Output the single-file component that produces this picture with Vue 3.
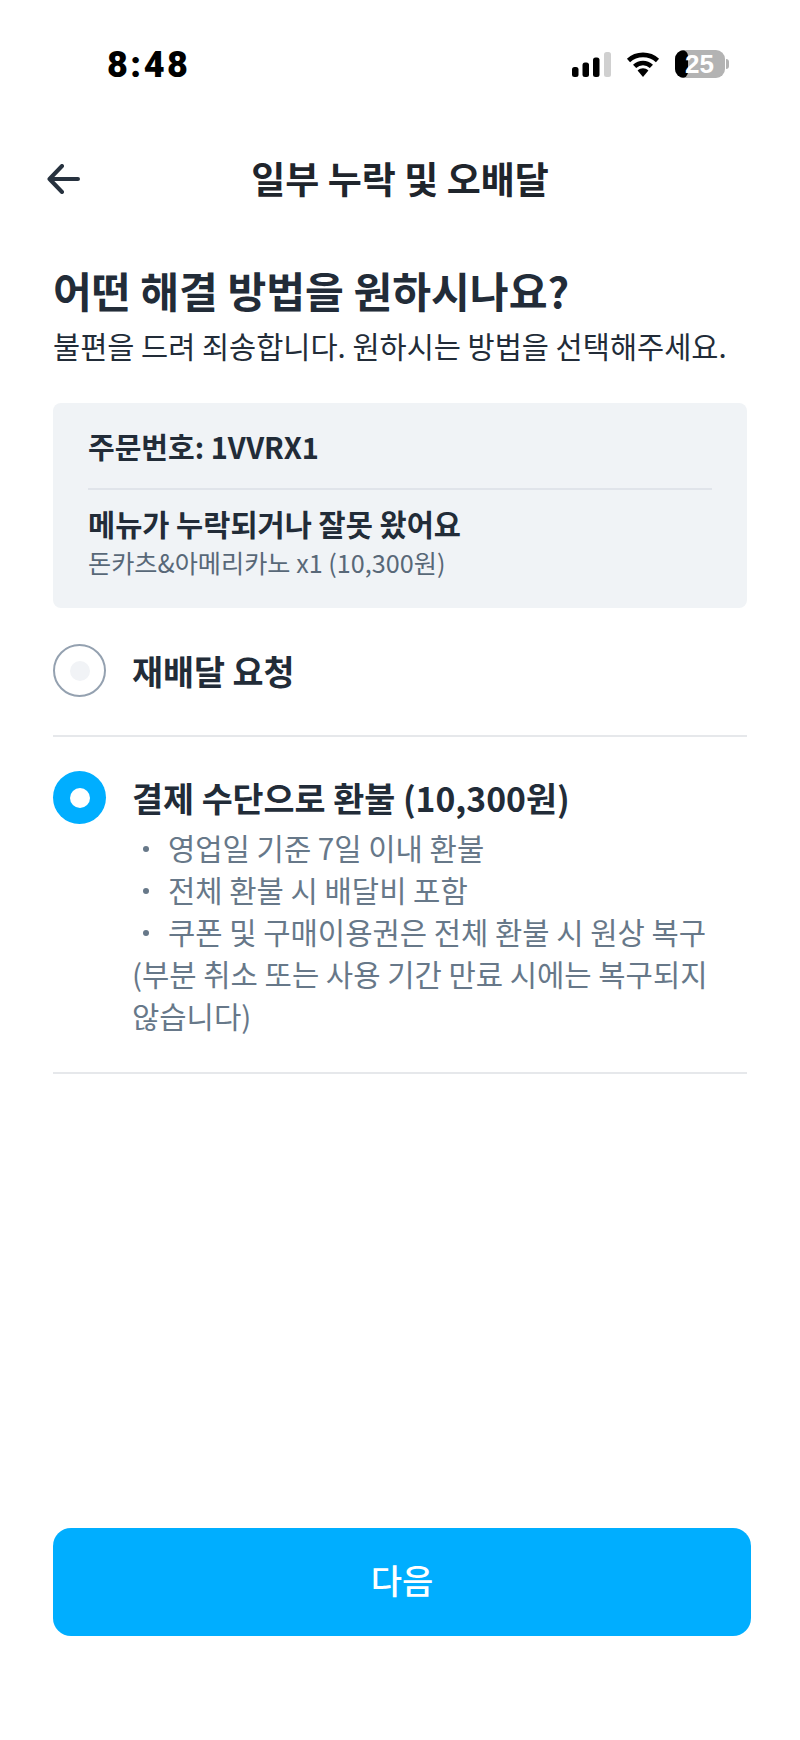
<script setup>
const bullets = ['영업일 기준 7일 이내 환불', '전체 환불 시 배달비 포함', '쿠폰 및 구매이용권은 전체 환불 시 원상 복구']
</script>

<template>
  <div class="page">
    <div class="status">
      <span class="time">8:48</span>
      <div class="status-icons">
        <svg class="signal" width="39" height="25" viewBox="0 0 39 25">
          <rect x="0" y="15" width="6.5" height="10" rx="2.5" fill="#000" />
          <rect x="10.5" y="10.5" width="6.5" height="14.5" rx="2.5" fill="#000" />
          <rect x="21" y="5.5" width="6.5" height="19.5" rx="2.5" fill="#000" />
          <rect x="32" y="0" width="7" height="25" rx="2.5" fill="#d0d0d0" />
        </svg>
        <svg class="wifi" width="34" height="25" viewBox="0 0 34 25">
          <path d="M2.5 8.5C10.5 1 23.5 1 31.5 8.5" fill="none" stroke="#000" stroke-width="4.6" stroke-linecap="butt" />
          <path d="M8.6 14.4C13.5 9.8 20.5 9.8 25.4 14.4" fill="none" stroke="#000" stroke-width="4.6" />
          <path d="M11.6 18.6C14.8 15.6 19.2 15.6 22.4 18.6L17 25Z" fill="#000" />
        </svg>
        <div class="battery">
          <div class="battery-body">
            <span class="battery-fill"></span>
            <span class="battery-text">25</span>
          </div>
          <span class="battery-tip"></span>
        </div>
      </div>
    </div>

    <header class="nav">
      <svg class="back" width="34" height="30" viewBox="0 0 34 30">
        <path d="M2.5 15H31M15 2L2.5 15L15 28" fill="none" stroke="#27323f" stroke-width="4" stroke-linecap="round" stroke-linejoin="round" />
      </svg>
      <h2 class="nav-title">일부 누락 및 오배달</h2>
    </header>

    <main class="content">
      <h1 class="headline">어떤 해결 방법을 원하시나요?</h1>
      <p class="sub">불편을 드려 죄송합니다. 원하시는 방법을 선택해주세요.</p>

      <section class="card">
        <div class="order">주문번호: 1VVRX1</div>
        <div class="card-line"></div>
        <div class="issue">메뉴가 누락되거나 잘못 왔어요</div>
        <div class="item">돈카츠&amp;아메리카노 x1 (10,300원)</div>
      </section>

      <div class="option first">
        <span class="radio off"><span class="dot"></span></span>
        <div class="option-label">재배달 요청</div>
      </div>

      <div class="option second">
        <span class="radio on"><span class="dot"></span></span>
        <div class="option-body">
          <div class="option-label">결제 수단으로 환불 (10,300원)</div>
          <div class="desc">
            <div v-for="b in bullets" :key="b" class="bullet"><span class="mark"></span>{{ b }}</div>
            <div>(부분 취소 또는 사용 기간 만료 시에는 복구되지 않습니다)</div>
          </div>
        </div>
      </div>
    </main>

    <div class="footer">
      <button class="next"><span class="next-label">다음</span></button>
    </div>
  </div>
</template>

<style>
html, body { margin: 0; background: #fff; }
</style>

<style scoped>
.page {
  width: 800px;
  height: 1740px;
  display: flex;
  flex-direction: column;
  background: #fff;
  font-family: "Noto Sans CJK KR", "Noto Sans", sans-serif;
  color: #222c38;
  overflow: hidden;
}
.status {
  height: 100px;
  box-sizing: border-box;
  padding: 50px 71px 0 107px;
  display: flex;
  justify-content: space-between;
  align-items: flex-start;
}
.time {
  font-family: Roboto, "Liberation Sans", sans-serif;
  font-weight: 900;
  font-size: 36px;
  line-height: 30px;
  color: #000;
  letter-spacing: 2.5px;
}
.status-icons { display: flex; align-items: center; gap: 15px; height: 28px; }
.signal, .wifi { display: block; margin-top: 1px; }
.battery { display: flex; align-items: center; gap: 1px; }
.battery-body {
  position: relative;
  width: 50px;
  height: 28px;
  border-radius: 9px;
  background: #b3b3b3;
  overflow: hidden;
}
.battery-fill {
  position: absolute;
  left: 0; top: 0; bottom: 0;
  width: 13px;
  background: #000;
  border-radius: 0 6px 6px 0;
}
.battery-text {
  position: absolute;
  left: 10px; top: 0;
  width: 28px;
  text-align: center;
  font-family: "Liberation Sans", sans-serif;
  font-weight: 700;
  font-size: 26px;
  line-height: 28px;
  color: #fff;
}
.battery-tip { width: 3px; height: 10px; background: #b3b3b3; border-radius: 0 3px 3px 0; }

.nav {
  position: relative;
  height: 156px;
  display: flex;
  align-items: center;
  justify-content: center;
}
.back { position: absolute; left: 47px; top: 64px; }
.nav-title {
  margin: 0;
  font-size: 37px;
  font-weight: 700;
  line-height: 156px;
  color: #1f252c;
}
.content { flex: 1; padding: 0 53px; }
.headline {
  margin: 0;
  padding-top: 4px;
  font-size: 42.2px;
  line-height: 60px;
  font-weight: 700;
  color: #222c38;
}
.sub {
  margin: 3px 0 0;
  font-size: 29.5px;
  line-height: 44px;
  color: #222c38;
  white-space: nowrap;
}
.card {
  margin-top: 36px;
  height: 205px;
  box-sizing: border-box;
  padding: 22px 35px 0;
  background: #f0f3f6;
  border-radius: 8px;
}
.order { font-size: 29px; font-weight: 700; line-height: 42px; }
.card-line { height: 2px; background: #e0e4ea; margin-top: 21px; }
.issue { margin-top: 12px; font-size: 29.5px; font-weight: 700; line-height: 42px; }
.item { margin-top: 1px; font-size: 25.2px; line-height: 34px; color: #586878; }

.option { display: flex; gap: 26px; }
.first {
  padding-top: 36px;
  height: 129px;
  box-sizing: border-box;
  align-items: flex-start;
  border-bottom: 2px solid #e6e8eb;
}
.first .option-label { margin-top: 2px; }
.second { padding: 34px 0 35px; border-bottom: 2px solid #e6e8eb; }
.radio {
  flex: none;
  width: 53px;
  height: 53px;
  border-radius: 50%;
  box-sizing: border-box;
  display: flex;
  align-items: center;
  justify-content: center;
}
.radio.off { border: 2px solid #94a1b0; }
.radio.off .dot { width: 20px; height: 20px; border-radius: 50%; background: #f1f3f6; }
.radio.on { background: #00aeff; }
.radio.on .dot { width: 20px; height: 20px; border-radius: 50%; background: #fff; }
.option-body { width: 590px; padding-top: 2px; }
.option-label { font-size: 33.7px; font-weight: 700; line-height: 49px; color: #222c38; }
.desc { font-size: 29.7px; line-height: 42px; color: #677889; margin-top: 5px; word-break: keep-all; }
.bullet { white-space: nowrap; display: flex; align-items: center; }
.mark {
  flex: none;
  width: 6px;
  height: 6px;
  margin: 2px 19px 0 11px;
  border-radius: 50%;
  background: #677889;
}

.footer { padding: 0 49px 104px 53px; }
.next {
  display: block;
  width: 698px;
  height: 108px;
  border: none;
  border-radius: 18px;
  background: #00aeff;
  color: #fff;
  font-family: inherit;
  font-size: 34px;
  font-weight: 500;
  padding: 0 0 6px;
}
</style>
